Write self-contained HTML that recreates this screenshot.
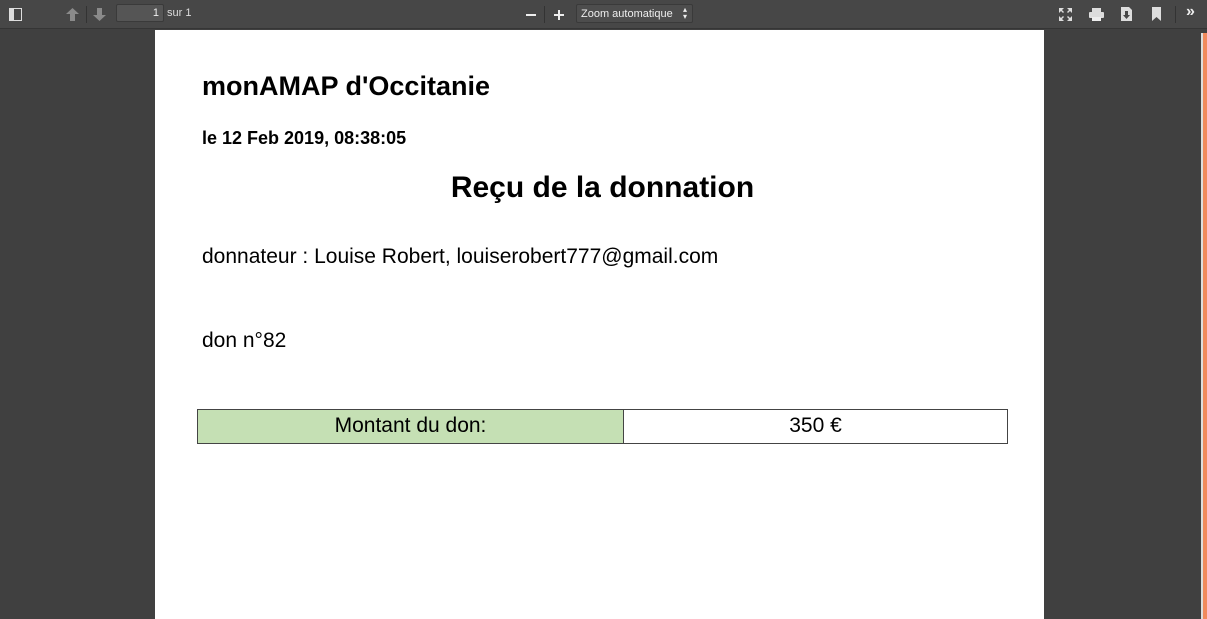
<!DOCTYPE html>
<html><head><style>
body{margin:0;width:1207px;height:619px;overflow:hidden;background:#404040;font-family:"Liberation Sans",sans-serif;position:relative}
.tb{position:absolute;left:0;top:0;width:1207px;height:29px;background:#474747;border-bottom:1px solid #353535;box-sizing:border-box}
.ab{position:absolute}
.page{position:absolute;left:155px;top:30px;width:889px;height:589px;background:#fff}
.t{position:absolute;white-space:nowrap;color:#000}
</style></head><body>
<div class="tb">
 <svg class="ab" style="left:9px;top:8px" width="13" height="13"><rect x="0.5" y="0.5" width="12" height="12" fill="none" stroke="#ddd"/><rect x="1" y="1" width="4" height="11" fill="#ddd"/></svg>
 <svg class="ab" style="left:66px;top:8px" width="13" height="13"><path d="M6.5 0L13 6H9V13H4V6H0Z" fill="#8a8a8a"/></svg>
 <div class="ab" style="left:86px;top:6px;width:1px;height:17px;background:#333"></div>
 <svg class="ab" style="left:93px;top:8px" width="13" height="13"><path d="M6.5 13L13 7H9V0H4V7H0Z" fill="#8a8a8a"/></svg>
 <div class="ab" style="left:116px;top:4px;width:48px;height:18px;background:#555;border:1px solid #3a3a3a;border-radius:2px;color:#eee;font-size:11px;text-align:right;box-sizing:border-box;padding:2px 4px">1</div>
 <div class="ab" style="left:167px;top:7px;color:#ddd;font-size:11px">sur 1</div>
 <div class="ab" style="left:526px;top:14px;width:10px;height:2px;background:#eee"></div>
 <div class="ab" style="left:544px;top:6px;width:1px;height:17px;background:#333"></div>
 <div class="ab" style="left:554px;top:14px;width:10px;height:2px;background:#eee"></div>
 <div class="ab" style="left:558px;top:10px;width:2px;height:10px;background:#eee"></div>
 <div class="ab" style="left:576px;top:4px;width:117px;height:19px;background:#4d4d4d;border:1px solid #3a3a3a;border-radius:2px;color:#eee;font-size:11px;box-sizing:border-box;padding:3px 4px">Zoom automatique<span style="position:absolute;right:5px;top:1px;font-size:8px;line-height:7px">▴<br>▾</span></div>
 <svg class="ab" style="left:1059px;top:8px" width="13" height="13" fill="#ddd"><path d="M0 0h5l-2 2 2 2-1 1-2-2-2 2zM13 0v5l-2-2-2 2-1-1 2-2-2-2zM0 13v-5l2 2 2-2 1 1-2 2 2 2zM13 13h-5l2-2-2-2 1-1 2 2 2-2z"/></svg>
 <svg class="ab" style="left:1089px;top:8px" width="15" height="13" fill="#ddd"><rect x="3" y="0" width="9" height="4"/><rect x="0" y="4" width="15" height="6" rx="1"/><rect x="3" y="9" width="9" height="4" fill="#eee"/></svg>
 <svg class="ab" style="left:1121px;top:7px" width="11" height="14" fill="#ddd"><path d="M0 0h8l3 3v11H0z"/><path d="M4 4h3v4h2l-3.5 4L2 8h2z" fill="#474747"/></svg>
 <svg class="ab" style="left:1152px;top:7px" width="9" height="14" fill="#ddd"><path d="M0 0h9v14L4.5 10 0 14z"/></svg>
 <div class="ab" style="left:1175px;top:6px;width:1px;height:17px;background:#333"></div>
 <div class="ab" style="left:1186px;top:3px;color:#eee;font-size:16px;font-weight:bold">»</div>
</div>
<div class="page">
 <div class="t" style="left:47px;top:41px;font-size:27px;font-weight:bold">monAMAP d'Occitanie</div>
 <div class="t" style="left:47px;top:98px;font-size:18px;font-weight:bold">le 12 Feb 2019, 08:38:05</div>
 <div class="t" style="left:0;width:895px;text-align:center;top:141px;font-size:30px;font-weight:bold">Reçu de la donnation</div>
 <div class="t" style="left:47px;top:215px;font-size:21px">donnateur : Louise Robert, louiserobert777@gmail.com</div>
 <div class="t" style="left:47px;top:299px;font-size:21px">don n°82</div>
 <div class="ab" style="left:42px;top:379px;width:427px;height:35px;background:#c5e0b4;border:1px solid #444;box-sizing:border-box;text-align:center;font-size:21px;line-height:32px">Montant du don:</div>
 <div class="ab" style="left:468px;top:379px;width:385px;height:35px;background:#fff;border:1px solid #444;box-sizing:border-box;text-align:center;font-size:21px;line-height:32px">350 €</div>
</div>
<div class="ab" style="left:1201px;top:33px;width:2px;height:586px;background:#ddd"></div>
<div class="ab" style="left:1203px;top:33px;width:4px;height:586px;background:#f08a5d"></div>
</body></html>
